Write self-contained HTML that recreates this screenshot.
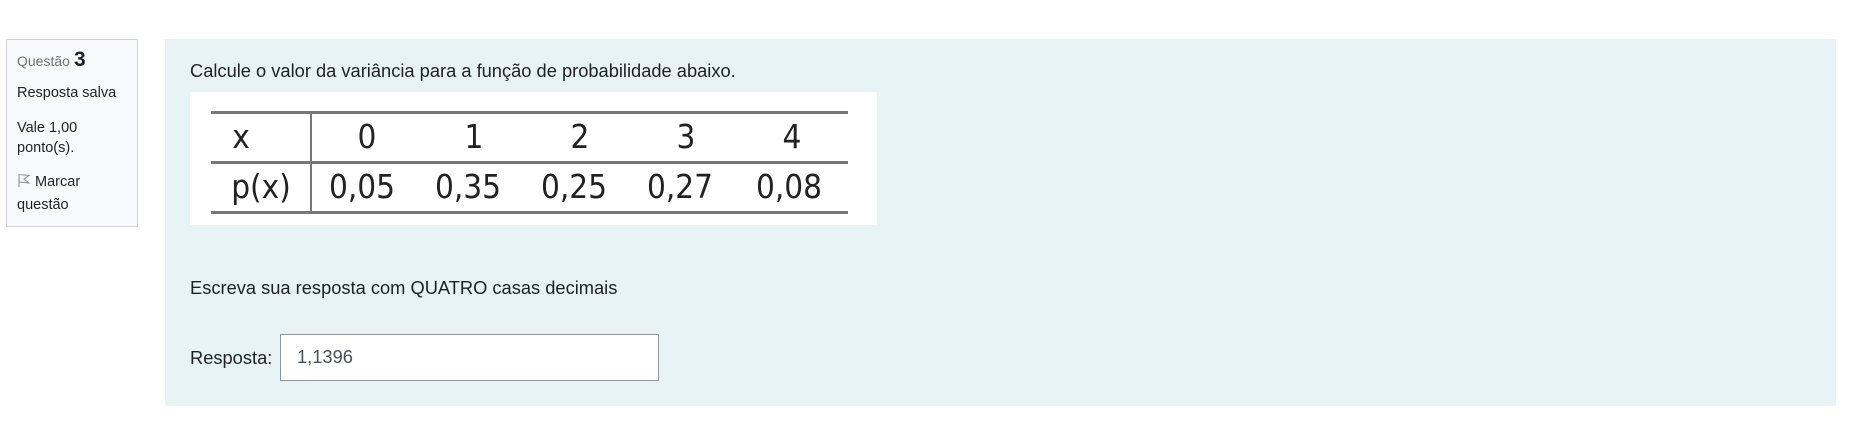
<!DOCTYPE html>
<html><head><meta charset="utf-8"><style>
*{margin:0;padding:0;box-sizing:border-box}
body{width:1859px;height:426px;background:#fff;position:relative;font-family:"Liberation Sans",Arial,sans-serif;color:#1d2125;overflow:hidden}
.info{position:absolute;left:6px;top:39px;width:132px;height:188px;background:#f8f9fa;border:1px solid #cfd4da}
.info div{position:absolute;left:10px;font-size:14.5px;line-height:20px}
.main{position:absolute;left:165px;top:39px;width:1671px;height:367px;background:#e7f3f5}
.t{position:absolute;font-size:18.3px;line-height:22px}
.img{position:absolute;left:190px;top:92px;width:687px;height:133px;background:#fff}
.line{position:absolute;height:3px;background:#777;left:211px;width:637px}
.n{position:absolute;font-family:"DejaVu Sans Condensed","Liberation Sans",sans-serif;font-size:33px;line-height:36px;color:#222;transform:translateX(-50%)}
.inp{position:absolute;left:280px;top:334px;width:379px;height:47px;background:#fff;border:1px solid #8f959e}
</style></head><body>
<div class="info">
<div style="top:10px"><span style="color:#6a737b;font-size:14px">Questão</span> <b style="font-size:21px">3</b></div>
<div style="top:43px">Resposta salva</div>
<div style="top:78px">Vale 1,00</div>
<div style="top:98px">ponto(s).</div>
<div style="top:132px"><svg width="14" height="14" viewBox="0 0 14 14" style="vertical-align:-1px"><path d="M2 1v13M2 1.5L12 2.5 7 6l5 4L2 9" fill="none" stroke="#888" stroke-width="1"/></svg> Marcar</div>
<div style="top:155px">questão</div>
</div>
<div class="main"></div>
<div class="t" style="left:190px;top:60px">Calcule o valor da variância para a função de probabilidade abaixo.</div>
<div class="img"></div>
<div class="line" style="top:111px"></div>
<div class="line" style="top:161px"></div>
<div class="line" style="top:211px"></div>
<div style="position:absolute;left:310px;top:112px;width:2px;height:100px;background:#777"></div>
<div class="n" style="left:241px;top:119px">x</div>
<div class="n" style="left:367px;top:119px">0</div>
<div class="n" style="left:474px;top:119px">1</div>
<div class="n" style="left:580px;top:119px">2</div>
<div class="n" style="left:686px;top:119px">3</div>
<div class="n" style="left:792px;top:119px">4</div>
<div class="n" style="left:261px;top:169px">p(x)</div>
<div class="n" style="left:362px;top:169px">0,05</div>
<div class="n" style="left:468px;top:169px">0,35</div>
<div class="n" style="left:574px;top:169px">0,25</div>
<div class="n" style="left:680px;top:169px">0,27</div>
<div class="n" style="left:789px;top:169px">0,08</div>
<div class="t" style="left:190px;top:277px">Escreva sua resposta com QUATRO casas decimais</div>
<div class="t" style="left:190px;top:347px">Resposta:</div>
<div class="inp"></div>
<div class="t" style="left:297px;top:346px;color:#495057">1,1396</div>
</body></html>
